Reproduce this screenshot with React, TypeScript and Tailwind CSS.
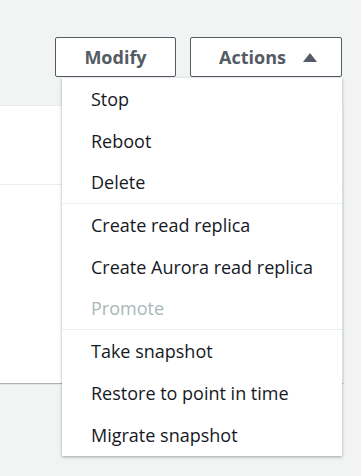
import { useState } from "react";

type Item = { label: string; disabled?: boolean; divider?: boolean };

const items: Item[] = [
    { label: "Stop" },
    { label: "Reboot" },
    { label: "Delete", divider: true },
    { label: "Create read replica" },
    { label: "Create Aurora read replica" },
    { label: "Promote", disabled: true, divider: true },
    { label: "Take snapshot" },
    { label: "Restore to point in time" },
    { label: "Migrate snapshot" },
];

const App = () => {
    const [open, setOpen] = useState(true);

    return (
        <div className="min-h-[476px] w-full bg-[#f2f3f3] pt-[37px] font-['Open_Sans','Liberation_Sans',sans-serif]">
            <div className="flex justify-end pr-[19px]">
                <button className="h-10 w-[121px] rounded-[2px] border border-[#545b64] bg-white text-[18px] font-bold text-[#545b64]">
                    Modify
                </button>
                <div className="relative ml-[14px]">
                    <button
                        className="flex h-10 w-[152px] items-center gap-[17px] rounded-[2px] border border-[#545b64] bg-white pl-[28px] text-[18px] font-bold text-[#545b64]"
                        onClick={() => setOpen(!open)}
                    >
                        Actions
                        <svg width="14" height="9" viewBox="0 0 14 9">
                            <path d="M7 0 L14 9 L0 9 Z" fill="#545b64" />
                        </svg>
                    </button>
                    {open && (
                        <ul className="absolute right-0 top-[41px] z-10 w-[280px] bg-white shadow-[0_1px_3px_rgba(0,28,36,0.35)]">
                            {items.map((item) => (
                                <li
                                    key={item.label}
                                    className={
                                        "flex h-[42px] items-center pl-[29px] text-[18px] " +
                                        (item.disabled ? "text-[#aab7b8] " : "text-[#16191f] ") +
                                        (item.divider ? "border-b border-[#eaeded]" : "")
                                    }
                                >
                                    {item.label}
                                </li>
                            ))}
                        </ul>
                    )}
                </div>
            </div>
            <div className="mt-[28px] w-[343px] border-t border-[#eaeded] bg-white shadow-[0_1px_1px_rgba(0,28,36,0.3)]">
                <div className="h-[79px] border-b border-[#eaeded]" />
                <div className="h-[198px]" />
            </div>
        </div>
    );
};

export default App;
